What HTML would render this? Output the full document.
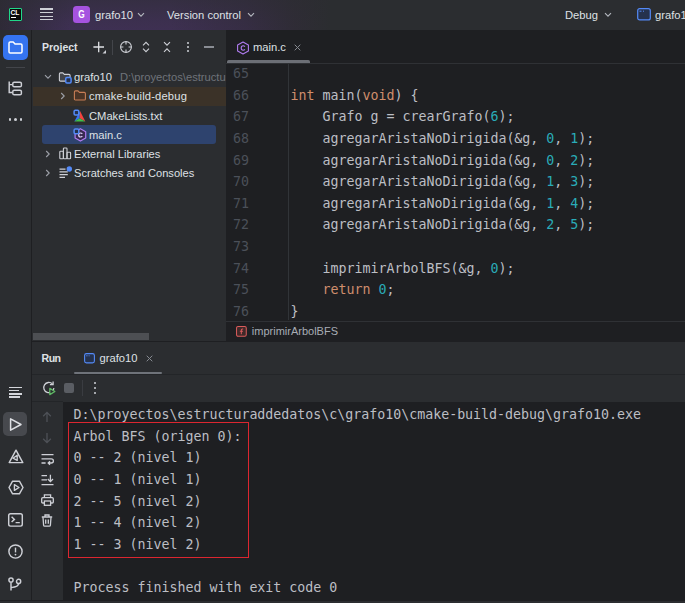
<!DOCTYPE html>
<html lang="es">
<head>
<meta charset="utf-8">
<title>grafo10 – main.c</title>
<style>
*{box-sizing:border-box;margin:0;padding:0}
html,body{width:685px;height:603px;overflow:hidden;background:#2b2d30}
body{position:relative;font-family:"Liberation Sans",sans-serif;font-size:11.2px;color:#dfe1e5;-webkit-font-smoothing:antialiased}
.abs{position:absolute}
.ui{position:absolute;white-space:nowrap;line-height:16px;height:16px;color:#dfe1e5}
.b{font-weight:bold}
.mono{font-family:"DejaVu Sans Mono","Liberation Mono",monospace}
svg{position:absolute;overflow:visible}
/* title bar */
#title{left:0;top:0;width:685px;height:30px;background:linear-gradient(180deg,rgba(43,45,48,0.45) 0%,rgba(43,45,48,0.1) 70%,rgba(43,45,48,0) 100%),linear-gradient(90deg,#2e2a37 0px,#3e3053 70px,#3e3052 170px,#362d44 245px,#2f2c36 295px,#2b2d30 330px)}
/* left stripe */
#stripe{left:0;top:30px;width:32px;height:573px;background:#2b2d30;border-right:1px solid #1e1f22}
/* project */
#proj{left:32px;top:30px;width:194px;height:311px;background:#2b2d30}
.row{position:absolute;left:0;width:194px;height:19px}
/* editor */
#editor{left:226px;top:30px;width:459px;height:311px;background:#1e1f22}
.ln{position:absolute;left:0;width:24px;text-align:left;color:#4b5059;font-size:13.3px;line-height:21.45px;height:21.45px}
.code{position:absolute;white-space:pre;color:#bcbec4;font-size:13.3px;line-height:21.45px;height:21.45px;letter-spacing:-0.01px}
.k{color:#cf8e6d}.n{color:#2aacb8}
/* run */
#run{left:32px;top:341px;width:653px;height:262px;background:#2b2d30}
#console{left:31px;top:60.5px;width:622px;height:198.5px;background:#1e1f22}
.out{letter-spacing:-0.015px;position:absolute;left:10.6px;white-space:pre;color:#bcbec4;font-size:13.3px;line-height:21.7px;height:21.7px}
</style>
</head>
<body>

<!-- ============ TITLE BAR ============ -->
<div id="title" class="abs">
  <!-- CLion logo -->
  <div class="abs" style="left:8.5px;top:7.8px;width:13.5px;height:13.4px;background:#0b0b0b;border:1.1px solid #21d789;border-radius:1px"></div>
  <div class="abs b" style="left:10.6px;top:9.6px;font-size:6.8px;line-height:6px;color:#fff;letter-spacing:-0.3px">CL</div>
  <div class="abs" style="left:11px;top:17px;width:4.6px;height:1.3px;background:#fff"></div>
  <!-- hamburger -->
  <div class="abs" style="left:40px;top:8.4px;width:13px;height:1.3px;background:#ced0d6"></div>
  <div class="abs" style="left:40px;top:12px;width:13px;height:1.3px;background:#ced0d6"></div>
  <div class="abs" style="left:40px;top:15.6px;width:13px;height:1.3px;background:#ced0d6"></div>
  <div class="abs" style="left:40px;top:19.2px;width:13px;height:1.3px;background:#ced0d6"></div>
  <!-- project badge -->
  <div class="abs" style="left:73px;top:6px;width:17px;height:17px;border-radius:3.5px;background:#a653e0"></div><div class="abs b" style="left:73px;top:6px;width:17px;height:17px;color:#fff;font-size:10.6px;line-height:17.4px;text-align:center;transform:scaleX(0.78)">G</div>
  <div class="ui" style="left:95px;top:7px">grafo10</div>
  <svg style="left:136.5px;top:12px" width="8" height="6" viewBox="0 0 8 6"><path d="M1 1.2 L4 4.2 L7 1.2" fill="none" stroke="#b4b8bf" stroke-width="1.1"/></svg>
  <div class="ui" style="left:167px;top:7px">Version control</div>
  <svg style="left:247px;top:12px" width="8" height="6" viewBox="0 0 8 6"><path d="M1 1.2 L4 4.2 L7 1.2" fill="none" stroke="#b4b8bf" stroke-width="1.1"/></svg>
  <div class="ui" style="left:565px;top:7px">Debug</div>
  <svg style="left:604px;top:12px" width="8" height="6" viewBox="0 0 8 6"><path d="M1 1.2 L4 4.2 L7 1.2" fill="none" stroke="#b4b8bf" stroke-width="1.1"/></svg>
  <svg style="left:637px;top:8px" width="14" height="13" viewBox="0 0 14 13"><rect x="0.7" y="0.7" width="12.6" height="11.2" rx="2" fill="#25324d" stroke="#548af7" stroke-width="1.2"/><path d="M2.5 3.2h2M6 3.2h1" stroke="#548af7" stroke-width="1"/></svg>
  <div class="ui" style="left:655px;top:7px">grafo10</div>
</div>

<!-- ============ LEFT STRIPE ============ -->
<div id="stripe" class="abs">
  <div class="abs" style="left:3px;top:5px;width:25px;height:25px;border-radius:5px;background:#3574f0"></div>
  <svg style="left:8px;top:11px" width="15" height="13" viewBox="0 0 15 13"><path d="M1 2.2 Q1 1 2.2 1 H5.2 L7 3 H12.8 Q14 3 14 4.2 V10.8 Q14 12 12.8 12 H2.2 Q1 12 1 10.8 Z" fill="none" stroke="#fff" stroke-width="1.5" stroke-linejoin="round"/></svg>
  <div class="abs" style="left:6px;top:37px;width:19px;height:1px;background:#43454a"></div>
  <!-- structure icon -->
  <svg style="left:8px;top:50.8px" width="15" height="15" viewBox="0 0 15 15"><g fill="none" stroke="#ced0d6" stroke-width="1.45"><path d="M1.2 0.5 V11.5 H4.5 M1.2 3.6 H4.5"/><rect x="4.8" y="1.2" width="8.6" height="4.6" rx="1.4"/><rect x="4.8" y="9.2" width="8.6" height="4.6" rx="1.4"/></g></svg>
  <!-- dots -->
  <div class="abs" style="left:8.5px;top:88px;width:2.6px;height:2.6px;border-radius:2px;background:#ced0d6"></div>
  <div class="abs" style="left:14px;top:88px;width:2.6px;height:2.6px;border-radius:2px;background:#ced0d6"></div>
  <div class="abs" style="left:19.5px;top:88px;width:2.6px;height:2.6px;border-radius:2px;background:#ced0d6"></div>
  <!-- bottom group -->
  <div class="abs" style="left:8.7px;top:356.8px;width:13px;height:1.6px;background:#d4d6db"></div>
  <div class="abs" style="left:8.7px;top:359.9px;width:10.5px;height:1.6px;background:#d4d6db"></div>
  <div class="abs" style="left:8.7px;top:363px;width:13px;height:1.6px;background:#d4d6db"></div>
  <div class="abs" style="left:8.7px;top:366.1px;width:11.5px;height:1.6px;background:#d4d6db"></div>
  <div class="abs" style="left:3.2px;top:382px;width:23.8px;height:23.6px;border-radius:5px;background:#47494e"></div>
  <svg style="left:8.5px;top:386.5px" width="14" height="15" viewBox="0 0 14 15"><path d="M1.6 1.8 V13.2 L12 7.5 Z" fill="none" stroke="#dfe1e5" stroke-width="1.5" stroke-linejoin="round"/></svg>
  <svg style="left:7.8px;top:419px" width="16" height="15" viewBox="0 0 16 15"><path d="M8 1.2 L14.8 13.6 H1.2 Z" fill="none" stroke="#ced0d6" stroke-width="1.45" stroke-linejoin="round"/><path d="M9.2 6.2 V11.4 L5 9.2 Z" fill="none" stroke="#ced0d6" stroke-width="1.35" stroke-linejoin="round"/></svg>
  <svg style="left:7.5px;top:450px" width="16" height="15" viewBox="0 0 16 15"><path d="M4.6 1.2 H11.4 L15 7.5 L11.4 13.8 H4.6 L1 7.5 Z" fill="none" stroke="#ced0d6" stroke-width="1.45" stroke-linejoin="round"/><path d="M6.4 4.6 V10.4 L11 7.5 Z" fill="none" stroke="#ced0d6" stroke-width="1.35" stroke-linejoin="round"/></svg>
  <svg style="left:7.5px;top:483px" width="16" height="14" viewBox="0 0 16 14"><rect x="0.7" y="0.7" width="13.6" height="12.4" rx="1.8" fill="none" stroke="#ced0d6" stroke-width="1.45"/><path d="M3.6 3.8 L6.4 6.4 L3.6 9 M7.6 9.6 H11.8" fill="none" stroke="#ced0d6" stroke-width="1.45"/></svg>
  <svg style="left:7.6px;top:514px" width="15" height="15" viewBox="0 0 15 15"><circle cx="7.5" cy="7.5" r="6.6" fill="none" stroke="#ced0d6" stroke-width="1.45"/><path d="M7.5 3.6 V8.4" stroke="#ced0d6" stroke-width="1.4" fill="none"/><circle cx="7.5" cy="10.6" r="0.9" fill="#ced0d6"/></svg>
  <svg style="left:8.4px;top:546.5px" width="14" height="14" viewBox="0 0 14 14"><g fill="none" stroke="#ced0d6" stroke-width="1.45"><circle cx="3" cy="3" r="2.1"/><circle cx="10.6" cy="4.4" r="2.1"/><path d="M3 5.2 V13.4 M10.6 6.6 Q10.6 10 3.2 10.6"/></g></svg>
</div>

<!-- ============ PROJECT PANEL ============ -->
<div id="proj" class="abs">
  <div class="ui b" style="left:10px;top:9px;font-size:10.5px">Project</div>
  <!-- header icons -->
  <svg style="left:61px;top:11px" width="14" height="14" viewBox="0 0 14 14"><path d="M0.4 6 H11 M5.7 0.7 V11.3" stroke="#dfe1e5" stroke-width="1.3" fill="none"/><path d="M13 9 V12.5 H9.5 Z" fill="#ced0d6"/></svg>
  <div class="abs" style="left:80px;top:9.5px;width:1px;height:15px;background:#43454a"></div>
  <svg style="left:87px;top:10px" width="14" height="14" viewBox="0 0 14 14"><g fill="none" stroke="#ced0d6" stroke-width="1.1"><circle cx="7" cy="7" r="5.4"/><path d="M7 1.6 V4.4 M7 9.6 V12.4 M1.6 7 H4.4 M9.6 7 H12.4"/></g></svg>
  <svg style="left:109px;top:11px" width="10" height="12" viewBox="0 0 10 12"><path d="M2 4.4 L5 1.4 L8 4.4 M2 7.6 L5 10.6 L8 7.6" fill="none" stroke="#ced0d6" stroke-width="1.1"/></svg>
  <svg style="left:130px;top:11px" width="10" height="12" viewBox="0 0 10 12"><path d="M2 1.2 L5 4.2 L8 1.2 M2 10.8 L5 7.8 L8 10.8" fill="none" stroke="#ced0d6" stroke-width="1.1"/></svg>
  <div class="abs" style="left:154.8px;top:11.8px;width:2.2px;height:2.2px;border-radius:2px;background:#ced0d6"></div>
  <div class="abs" style="left:154.8px;top:15.9px;width:2.2px;height:2.2px;border-radius:2px;background:#ced0d6"></div>
  <div class="abs" style="left:154.8px;top:20px;width:2.2px;height:2.2px;border-radius:2px;background:#ced0d6"></div>
  <div class="abs" style="left:171.5px;top:16.4px;width:10.5px;height:1.2px;background:#8a8d94"></div>

  <!-- tree -->
  <div class="abs" style="left:1px;top:56.5px;width:193px;height:19px;background:#3b3228"></div>
  <div class="abs" style="left:10px;top:95px;width:174px;height:18.7px;border-radius:3px;background:#2e436e"></div>

  <!-- row: grafo10 -->
  <svg style="left:12px;top:44px" width="8" height="6" viewBox="0 0 8 6"><path d="M1 1.2 L4 4.2 L7 1.2" fill="none" stroke="#9da0a8" stroke-width="1.1"/></svg>
  <svg style="left:26px;top:40px" width="14" height="14" viewBox="0 0 14 14"><path d="M1.4 4 Q1.4 2.9 2.5 2.9 H4.9 L6.3 4.4 H11 Q12.1 4.4 12.1 5.5 V10 Q12.1 11.1 11 11.1 H2.5 Q1.4 11.1 1.4 10 Z" fill="#43454a" stroke="#ced0d6" stroke-width="1.1" stroke-linejoin="round"/><rect x="7.7" y="7.5" width="5.4" height="5.4" rx="1.2" fill="#25324d" stroke="#548af7" stroke-width="1.5"/></svg>
  <div class="ui" style="left:42px;top:39px">grafo10</div>
  <div class="abs" style="left:88px;top:39px;width:106px;height:16px;overflow:hidden"><div class="ui" style="left:0;top:0;color:#6f737a">D:\proyectos\estructuraddedatos\c\grafo10</div></div>

  <!-- row: cmake-build-debug -->
  <svg style="left:28.2px;top:62.4px" width="6" height="8" viewBox="0 0 6 8"><path d="M1.2 1 L4.2 4 L1.2 7" fill="none" stroke="#9da0a8" stroke-width="1.1"/></svg>
  <svg style="left:41px;top:60.4px" width="14" height="13" viewBox="0 0 14 13"><path d="M1.4 2 Q1.4 0.9 2.5 0.9 H5 L6.4 2.4 H11.3 Q12.4 2.4 12.4 3.5 V8.9 Q12.4 10 11.3 10 H2.5 Q1.4 10 1.4 8.9 Z" fill="#4a3426" stroke="#c77d55" stroke-width="1.1" stroke-linejoin="round"/></svg>
  <div class="ui" style="left:57px;top:58.3px;letter-spacing:0.17px">cmake-build-debug</div>

  <!-- row: CMakeLists.txt -->
  <svg style="left:41px;top:78.6px" width="14" height="15" viewBox="0 0 14 15"><path d="M7.1 2 L1.3 12.4 L6.6 9.2 Z" fill="#3574f0"/><path d="M7.1 2 L12.3 12.4 L6.6 9.2 Z" fill="#f2443f"/><path d="M1.3 12.4 L6.6 9.2 L12.3 12.4 Z" fill="#3fbf4a"/><rect x="1.1" y="1.3" width="4.7" height="4.6" rx="1.2" fill="#25324d" stroke="#548af7" stroke-width="1.5"/></svg>
  <div class="ui" style="left:57px;top:77.5px">CMakeLists.txt</div>

  <!-- row: main.c -->
  <svg style="left:41px;top:97.6px" width="15" height="15" viewBox="0 0 15 15"><path d="M7.4 0.7 L12.7 3.8 V10 L7.4 13.1 L2.1 10 V3.8 Z" fill="#3a2a52" stroke="#b07cf0" stroke-width="1.2" stroke-linejoin="round"/><path d="M9.3 5.9 Q8.6 5 7.5 5 Q5.7 5 5.7 7 Q5.7 9 7.5 9 Q8.6 9 9.3 8.1" fill="none" stroke="#e3d3fc" stroke-width="1.2"/><rect x="1.1" y="1.1" width="4.7" height="4.6" rx="1.2" fill="#25324d" stroke="#548af7" stroke-width="1.5"/></svg>
  <div class="ui" style="left:57px;top:96.6px">main.c</div>

  <!-- row: External Libraries -->
  <svg style="left:13px;top:119.9px" width="6" height="8" viewBox="0 0 6 8"><path d="M1.2 1 L4.2 4 L1.2 7" fill="none" stroke="#9da0a8" stroke-width="1.1"/></svg>
  <svg style="left:27px;top:116.9px" width="13" height="13" viewBox="0 0 13 13"><g fill="none" stroke="#ced0d6" stroke-width="1.1"><rect x="0.8" y="4.2" width="3.6" height="7.6" rx="0.8"/><rect x="4.4" y="1" width="3.6" height="10.8" rx="0.8"/><rect x="8" y="5.2" width="3.6" height="6.6" rx="0.8"/></g></svg>
  <div class="ui" style="left:42px;top:115.9px;font-size:11.1px">External Libraries</div>

  <!-- row: Scratches and Consoles -->
  <svg style="left:13px;top:139.1px" width="6" height="8" viewBox="0 0 6 8"><path d="M1.2 1 L4.2 4 L1.2 7" fill="none" stroke="#9da0a8" stroke-width="1.1"/></svg>
  <svg style="left:27px;top:136.1px" width="14" height="13" viewBox="0 0 14 13"><path d="M0.5 3.2 H6.5 M0.5 5.9 H8.8 M0.5 8.6 H8.8 M0.5 11.3 H6" fill="none" stroke="#ced0d6" stroke-width="1.2"/><circle cx="10.3" cy="3" r="2.7" fill="#548af7"/></svg>
  <div class="ui" style="left:42px;top:135.1px;font-size:11.1px">Scratches and Consoles</div>

  <!-- horizontal scrollbar -->
  <div class="abs" style="left:1px;top:303px;width:116px;height:7px;background:#4d4f53"></div>
</div>

<!-- ============ EDITOR ============ -->
<div id="editor" class="abs">
  <!-- tab -->
  <svg style="left:10px;top:10.5px" width="14" height="14" viewBox="0 0 14 14"><path d="M7 1 L12.4 4 V10 L7 13 L1.6 10 V4 Z" fill="none" stroke="#b07cf0" stroke-width="1.1" stroke-linejoin="round"/><path d="M8.9 5.7 Q8.2 4.8 7.1 4.8 Q5.2 4.8 5.2 7 Q5.2 9.2 7.1 9.2 Q8.2 9.2 8.9 8.3" fill="none" stroke="#b07cf0" stroke-width="1.1"/></svg>
  <div class="ui" style="left:27px;top:9.1px">main.c</div>
  <svg style="left:68px;top:14px" width="7" height="7" viewBox="0 0 7 7"><path d="M0.7 0.7 L6.3 6.3 M6.3 0.7 L0.7 6.3" stroke="#868a91" stroke-width="1" fill="none"/></svg>
  <div class="abs" style="left:1px;top:30.3px;width:83px;height:3.4px;border-radius:1.7px;background:#6c6f76"></div>
  <div class="abs" style="left:0;top:33px;width:459px;height:1px;background:#2f3135"></div>
  <!-- gutter line -->
  <div class="abs" style="left:62px;top:34px;width:1px;height:256px;background:#313438"></div>
  <!-- code -->
  <div class="ln mono" style="left:7px;top:33.28px">65</div>
  <div class="ln mono" style="left:7px;top:54.87px">66</div><div class="code mono" style="left:64.5px;top:54.87px"><span class="k">int</span> main(<span class="k">void</span>) {</div>
  <div class="ln mono" style="left:7px;top:76.46px">67</div><div class="code mono" style="left:64.5px;top:76.46px">    Grafo g = crearGrafo(<span class="n">6</span>);</div>
  <div class="ln mono" style="left:7px;top:98.05px">68</div><div class="code mono" style="left:64.5px;top:98.05px">    agregarAristaNoDirigida(&amp;g, <span class="n">0</span>, <span class="n">1</span>);</div>
  <div class="ln mono" style="left:7px;top:119.63px">69</div><div class="code mono" style="left:64.5px;top:119.63px">    agregarAristaNoDirigida(&amp;g, <span class="n">0</span>, <span class="n">2</span>);</div>
  <div class="ln mono" style="left:7px;top:141.23px">70</div><div class="code mono" style="left:64.5px;top:141.23px">    agregarAristaNoDirigida(&amp;g, <span class="n">1</span>, <span class="n">3</span>);</div>
  <div class="ln mono" style="left:7px;top:162.82px">71</div><div class="code mono" style="left:64.5px;top:162.82px">    agregarAristaNoDirigida(&amp;g, <span class="n">1</span>, <span class="n">4</span>);</div>
  <div class="ln mono" style="left:7px;top:184.41px">72</div><div class="code mono" style="left:64.5px;top:184.41px">    agregarAristaNoDirigida(&amp;g, <span class="n">2</span>, <span class="n">5</span>);</div>
  <div class="ln mono" style="left:7px;top:206.00px">73</div>
  <div class="ln mono" style="left:7px;top:227.59px">74</div><div class="code mono" style="left:64.5px;top:227.59px">    imprimirArbolBFS(&amp;g, <span class="n">0</span>);</div>
  <div class="ln mono" style="left:7px;top:249.18px">75</div><div class="code mono" style="left:64.5px;top:249.18px">    <span class="k">return</span> <span class="n">0</span>;</div>
  <div class="ln mono" style="left:7px;top:270.76px">76</div><div class="code mono" style="left:64.5px;top:270.76px">}</div>
  <!-- breadcrumbs -->
  <div class="abs" style="left:0;top:290.5px;width:459px;height:1px;background:#2f3135"></div>
  <svg style="left:9.8px;top:295.6px" width="11" height="11" viewBox="0 0 12 12"><rect x="0.6" y="0.6" width="10.6" height="10.6" rx="1.6" fill="#402929" stroke="#db5c5c" stroke-width="1.1"/><path d="M7.8 3.2 H7 Q5.8 3.2 5.8 4.4 V9 M4.2 5.6 H7.6" fill="none" stroke="#db5c5c" stroke-width="1.1"/></svg>
  <div class="ui" style="left:25.8px;top:293px;font-size:11px;color:#a8adb5">imprimirArbolBFS</div>
</div>

<!-- ============ RUN PANEL ============ -->
<div id="run" class="abs">
  <div class="abs" style="left:0;top:0;width:653px;height:1px;background:#1e1f22"></div>
  <!-- header -->
  <div class="ui b" style="left:9.6px;top:8.8px;font-size:10.6px;letter-spacing:-0.55px">Run</div>
  <svg style="left:52px;top:11.5px" width="11" height="10.5" viewBox="0 0 11 10.5"><rect x="0.6" y="0.6" width="9.8" height="9.3" rx="1.8" fill="#25324d" stroke="#548af7" stroke-width="1.1"/><path d="M2.2 2.8h1.4M4.6 2.8h1" stroke="#548af7" stroke-width="0.9"/></svg>
  <div class="ui" style="left:67.5px;top:9px">grafo10</div>
  <svg style="left:114px;top:13.5px" width="7" height="7" viewBox="0 0 7 7"><path d="M0.7 0.7 L6.3 6.3 M6.3 0.7 L0.7 6.3" stroke="#868a91" stroke-width="1" fill="none"/></svg>
  <div class="abs" style="left:42px;top:30.5px;width:87.5px;height:2.8px;border-radius:1.5px;background:#6f737a"></div>
  <div class="abs" style="left:0;top:33px;width:653px;height:1px;background:#232528"></div>
  <!-- toolbar -->
  <svg style="left:9.5px;top:40.2px" width="15" height="15" viewBox="0 0 15 15"><path d="M10.4 2.9 A5.1 5.1 0 1 0 11.9 7.2" fill="none" stroke="#ced0d6" stroke-width="1.3"/><path d="M7.9 3.6 H11.1 V0.5" fill="none" stroke="#ced0d6" stroke-width="1.3"/><path d="M7.8 7.4 L12.9 10.5 L7.8 13.6 Z" fill="#2b2d30" stroke="#5fb865" stroke-width="1.25" stroke-linejoin="round"/></svg>
  <div class="abs" style="left:31.6px;top:42px;width:10.6px;height:10.4px;border-radius:2px;background:#5a5d63"></div>
  <div class="abs" style="left:50.2px;top:39px;width:1px;height:16px;background:#3a3c41"></div>
  <div class="abs" style="left:61.8px;top:41.20px;width:2.2px;height:2.2px;border-radius:2px;background:#ced0d6"></div>
  <div class="abs" style="left:61.8px;top:45.90px;width:2.2px;height:2.2px;border-radius:2px;background:#ced0d6"></div>
  <div class="abs" style="left:61.8px;top:50.60px;width:2.2px;height:2.2px;border-radius:2px;background:#ced0d6"></div>
  <!-- console side toolbar -->
  <svg style="left:9px;top:69.5px" width="12" height="12" viewBox="0 0 12 12"><path d="M6 11 V1.5 M2.2 5.2 L6 1.4 L9.8 5.2" fill="none" stroke="#4e5157" stroke-width="1.3"/></svg>
  <svg style="left:9px;top:90.5px" width="12" height="12" viewBox="0 0 12 12"><path d="M6 1 V10.5 M2.2 6.8 L6 10.6 L9.8 6.8" fill="none" stroke="#4e5157" stroke-width="1.3"/></svg>
  <svg style="left:8.5px;top:112px" width="13" height="12" viewBox="0 0 13 12"><path d="M0.5 1.6 H12.5 M0.5 5.8 H10.2 Q12.4 5.8 12.4 7.9 Q12.4 10 10.2 10 H7.4 M0.5 10 H4.6 M9 8.2 L7.2 10 L9 11.8" fill="none" stroke="#ced0d6" stroke-width="1.3"/></svg>
  <svg style="left:8.5px;top:132.5px" width="13" height="12" viewBox="0 0 13 12"><path d="M0.5 1.6 H6 M0.5 5.8 H6 M0.5 10.6 H12.5 M9.4 0.8 V7.4 M6.8 5 L9.4 7.6 L12 5" fill="none" stroke="#ced0d6" stroke-width="1.3"/></svg>
  <svg style="left:8.5px;top:153px" width="13" height="12" viewBox="0 0 13 12"><g fill="none" stroke="#ced0d6" stroke-width="1.3"><path d="M3.4 3.6 V0.8 H9.6 V3.6"/><path d="M3.2 9 H1.8 Q0.7 9 0.7 7.9 V4.8 Q0.7 3.7 1.8 3.7 H11.2 Q12.3 3.7 12.3 4.8 V7.9 Q12.3 9 11.2 9 H9.8"/><rect x="3.4" y="7" width="6.2" height="4.3"/></g></svg>
  <svg style="left:9px;top:173px" width="12" height="13" viewBox="0 0 12 13"><g fill="none" stroke="#ced0d6" stroke-width="1.3"><path d="M0.8 3 H11.2 M4 2.8 V1 H8 V2.8"/><path d="M2 3.2 L2.6 11.2 Q2.7 12.2 3.7 12.2 H8.3 Q9.3 12.2 9.4 11.2 L10 3.2"/><path d="M4.7 5.4 V9.8 M7.3 5.4 V9.8"/></g></svg>
  <div class="abs" style="left:0;top:60px;width:31px;height:1px;background:#232528"></div>
  <!-- console -->
  <div id="console" class="abs mono">
    <div class="out" style="top:2.70px">D:\proyectos\estructuraddedatos\c\grafo10\cmake-build-debug\grafo10.exe</div>
    <div class="out" style="top:24.28px">Arbol BFS (origen 0):</div>
    <div class="out" style="top:45.86px">0 -- 2 (nivel 1)</div>
    <div class="out" style="top:67.44px">0 -- 1 (nivel 1)</div>
    <div class="out" style="top:89.02px">2 -- 5 (nivel 2)</div>
    <div class="out" style="top:110.60px">1 -- 4 (nivel 2)</div>
    <div class="out" style="top:132.18px">1 -- 3 (nivel 2)</div>
    <div class="out" style="top:175.34px">Process finished with exit code 0</div>
    <div class="abs" style="left:5.2px;top:20.2px;width:180.8px;height:136.2px;border:1.7px solid #dc2630"></div>
  </div>
  <div class="abs" style="left:0;top:258.5px;width:653px;height:1px;background:#1e1f22"></div>
</div>

<div class="abs" style="left:0;top:599.5px;width:685px;height:1px;background:#1e1f22"></div>
<div class="abs" style="left:0;top:600.5px;width:685px;height:2.5px;background:#2b2d30"></div>
</body>
</html>
